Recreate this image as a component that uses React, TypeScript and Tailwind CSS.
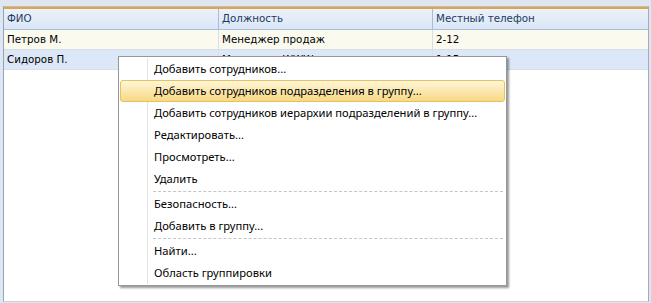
import React from 'react'

const gridFont = { fontFamily: '"DejaVu Sans", Verdana, sans-serif' }
const menuFont = { fontFamily: '"Noto Sans", "Open Sans", sans-serif' }

type Row = { name: string; job: string; phone: string }

const rows: Row[] = [
  { name: 'Петров М.', job: 'Менеджер продаж', phone: '2-12' },
  { name: 'Сидоров П.', job: 'Менеджер WWW', phone: '1-15' },
]

type Item = { label: string; active?: boolean } | 'sep'

const items: Item[] = [
  { label: 'Добавить сотрудников...' },
  { label: 'Добавить сотрудников подразделения в группу...', active: true },
  { label: 'Добавить сотрудников иерархии подразделений в группу...' },
  { label: 'Редактировать...' },
  { label: 'Просмотреть...' },
  { label: 'Удалить' },
  'sep',
  { label: 'Безопасность...' },
  { label: 'Добавить в группу...' },
  'sep',
  { label: 'Найти...' },
  { label: 'Область группировки' },
]

function ContextMenu() {
  return (
    <div
      className="absolute left-[118px] top-[56px] w-[389px] border border-[#979797] bg-white py-[1px] shadow-[2px_2px_2px_rgba(0,0,0,0.4)]"
      style={menuFont}
    >
      <div className="relative">
        {/* icon gutter line */}
        <div className="absolute left-[28px] top-0 bottom-0 w-px bg-[#e3e3e3]" />
        {items.map((it, i) =>
          it === 'sep' ? (
            <div key={i} className="flex h-[3px] items-center pl-[34px] pr-[3px]">
              <div className="w-full border-t border-dashed border-[#c5c5c5]" />
            </div>
          ) : (
            <div key={i} className="relative h-[22px] px-[1px]">
              <div
                className={
                  it.active
                    ? 'flex h-full items-center rounded-[3px] border border-[#e6c25e] bg-gradient-to-b from-[#fef6d8] to-[#f8d982] pl-[33px] text-[11.2px] text-black'
                    : 'flex h-full items-center border border-transparent pl-[33px] text-[11.2px] text-black'
                }
              >
                {it.label}
              </div>
            </div>
          )
        )}
      </div>
    </div>
  )
}

export default function App() {
  return (
    <div className="relative h-[303px] w-[651px] overflow-hidden bg-[#dfe6ef]">
      <div className="ml-[3px] mt-[6px] flex h-[296px] w-[646px] flex-col border-l border-r border-t border-b border-l-[#8ea6c5] border-r-[#9aaec8] border-t-[#b3c0cf] border-b-[#cfcfcf] bg-white">
        <div className="h-[2px] bg-[#e5a442]" />
        {/* header */}
        <div
          className="flex h-[21px] border-b border-[#a9bdd6] bg-gradient-to-b from-[#ecf2fb] to-[#dae6f6] text-[10.3px] text-[#1e3a60]"
          style={gridFont}
        >
          <div className="flex w-[215px] items-center border-r border-[#a7bcd7] pl-[3px]">ФИО</div>
          <div className="flex w-[214px] items-center border-r border-[#a7bcd7] pl-[3px]">Должность</div>
          <div className="flex flex-1 items-center pl-[3px]">Местный телефон</div>
        </div>
        {rows.map((r, i) => (
          <div
            key={i}
            className={
              i === 0
                ? 'flex h-[20px] border-b border-[#d7dee8] bg-[#fbfaef] text-[10.3px] text-black'
                : 'flex h-[20px] border-b border-[#d7dee8] bg-[#dce8f8] text-[10.3px] text-black'
            }
            style={gridFont}
          >
            <div className="flex w-[215px] items-center border-r border-[#d7dee8] pl-[3px]">{r.name}</div>
            <div className="flex w-[214px] items-center border-r border-[#d7dee8] pl-[3px]">{r.job}</div>
            <div className="flex flex-1 items-center pl-[3px]">{r.phone}</div>
          </div>
        ))}
        <div className="flex-1" />
      </div>
      <ContextMenu />
    </div>
  )
}
